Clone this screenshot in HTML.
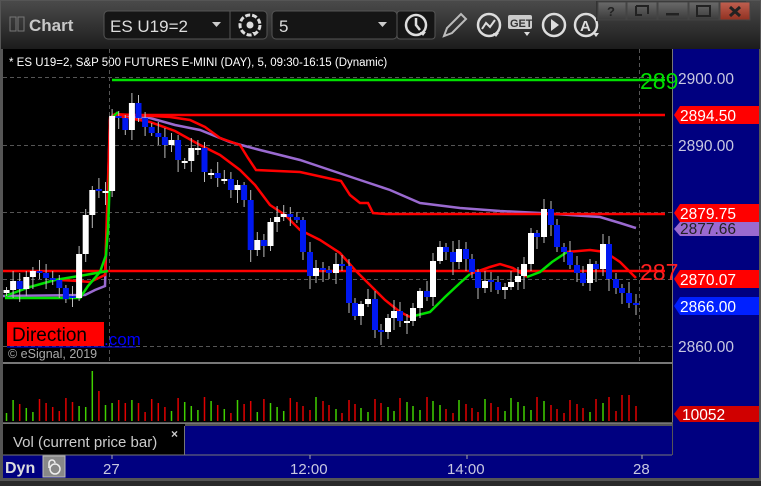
<!DOCTYPE html>
<html><head><meta charset="utf-8"><style>
body{margin:0;width:761px;height:481px;overflow:hidden;background:#2a2a2a;font-family:"Liberation Sans",sans-serif}
</style></head><body>
<svg id="s" width="761" height="481" xmlns="http://www.w3.org/2000/svg" font-family="Liberation Sans, sans-serif">
<defs><linearGradient id="tb" x1="0" y1="0" x2="0" y2="1"><stop offset="0" stop-color="#4a4a4a"/><stop offset="1" stop-color="#1c1c1c"/></linearGradient>
<linearGradient id="bt" x1="0" y1="0" x2="0" y2="1"><stop offset="0" stop-color="#6a6a6a"/><stop offset="1" stop-color="#3a3a3a"/></linearGradient>
<linearGradient id="bx" x1="0" y1="0" x2="0" y2="1"><stop offset="0" stop-color="#c06050"/><stop offset="1" stop-color="#903020"/></linearGradient></defs>
<rect width="761" height="481" fill="#555"/>
<rect x="1" y="1" width="759" height="48" fill="url(#tb)"/>
<rect x="10" y="17" width="6" height="14" fill="none" stroke="#777"/><rect x="18" y="17" width="6" height="14" fill="none" stroke="#777"/>
<text x="29" y="31" fill="#c8c8c8" font-size="17" font-weight="bold">Chart</text>
<rect x="104" y="11" width="163" height="28" rx="4" fill="#151515" stroke="#555"/>
<text x="110" y="32" fill="#ddd" font-size="17">ES U19=2</text>
<path d="M212 22l9 0-4.5 5z" fill="#ccc"/>
<line x1="230" y1="11" x2="230" y2="39" stroke="#555"/>
<circle cx="250" cy="25" r="10" fill="none" stroke="#ddd" stroke-width="3" stroke-dasharray="5 2"/><circle cx="250" cy="25" r="3.5" fill="#ddd"/><path d="M252 32l6 0-3 4z" fill="#ddd"/>
<rect x="272" y="11" width="125" height="28" rx="4" fill="#151515" stroke="#555"/>
<text x="279" y="32" fill="#ddd" font-size="17">5</text>
<path d="M378 22l9 0-4.5 5z" fill="#ccc"/>
<rect x="397" y="11" width="38" height="28" rx="3" fill="#151515" stroke="#555"/>
<circle cx="416" cy="25" r="10" fill="none" stroke="#ddd" stroke-width="2.5"/><path d="M416 18v7l4 5" stroke="#ddd" stroke-width="2.5" fill="none"/><path d="M420 32l6 0-3 4z" fill="#ddd"/>
<path d="M444 36l3-8 14-14 5 5-14 14z" fill="none" stroke="#bbb" stroke-width="2"/>
<circle cx="489" cy="25" r="11" fill="none" stroke="#ddd" stroke-width="2.5"/><path d="M482 29l4-6 4 4 5-7" stroke="#ddd" stroke-width="2" fill="none"/><path d="M493 33l6 0-3 4z" fill="#ddd"/>
<rect x="508" y="15" width="24" height="14" rx="2" fill="#ccc"/><text x="510" y="27" font-size="11" font-weight="bold" fill="#333">GET</text><path d="M524 32l6 0-3 4z" fill="#ddd"/>
<circle cx="554" cy="25" r="11" fill="none" stroke="#ddd" stroke-width="2.5"/><path d="M551 19v12l8-6z" fill="#ddd"/>
<circle cx="586" cy="25" r="11" fill="none" stroke="#ddd" stroke-width="2.5"/><text x="580" y="31" font-size="15" font-weight="bold" fill="#ddd">A</text><path d="M593 33l6 0-3 4z" fill="#ddd"/>
<rect x="596" y="1" width="150" height="20" fill="#333"/>
<rect x="598" y="2" width="28" height="18" fill="url(#bt)" stroke="#444"/><text x="607" y="16" fill="#222" font-size="13" font-weight="bold">?</text>
<rect x="627" y="2" width="30" height="18" fill="url(#bt)" stroke="#444"/><path d="M636 6h12v8M636 6v9h6" stroke="#222" stroke-width="2" fill="none"/>
<rect x="658" y="2" width="30" height="18" fill="url(#bt)" stroke="#444"/><rect x="666" y="13" width="13" height="2.5" fill="#222"/>
<rect x="689" y="2" width="30" height="18" fill="url(#bt)" stroke="#444"/><rect x="697" y="6" width="13" height="10" fill="none" stroke="#222" stroke-width="2"/>
<rect x="720" y="2" width="30" height="18" fill="url(#bx)" stroke="#444"/><path d="M730 7l10 9M740 7l-10 9" stroke="#222" stroke-width="3"/>
<rect x="3" y="49" width="670" height="314" fill="#000"/>
<rect x="673" y="49" width="86" height="406" fill="#000080"/>
<line x1="672.5" y1="49" x2="672.5" y2="422" stroke="#777"/>
<text x="9" y="66" fill="#fff" font-size="11.5">* ES U19=2, S&amp;P 500 FUTURES E-MINI (DAY), 5, 09:30-16:15 (Dynamic)</text>
<g stroke="#555" stroke-dasharray="4 3" stroke-width="1">
<line x1="3" y1="77.5" x2="672" y2="77.5"/><line x1="3" y1="145.5" x2="672" y2="145.5"/><line x1="3" y1="212.5" x2="672" y2="212.5"/><line x1="3" y1="279.5" x2="672" y2="279.5"/><line x1="3" y1="346.5" x2="672" y2="346.5"/>
<line x1="109.5" y1="49" x2="109.5" y2="362"/><line x1="639.5" y1="49" x2="639.5" y2="362"/>
<line x1="3" y1="421.5" x2="672" y2="421.5"/>
</g>
<line x1="112" y1="80" x2="665" y2="80" stroke="#00e000" stroke-width="2.5"/>
<line x1="112" y1="115" x2="665" y2="115" stroke="#ff0000" stroke-width="2.5"/>
<line x1="3" y1="271" x2="665" y2="271" stroke="#ff0000" stroke-width="2.5"/>
<g fill="none" stroke-width="2.5">
<polyline stroke="#9a6ad0" points="3,296 85,295 95,290 105,286 110,120 112,116 150,118 175,125 200,130 230,142 260,150 300,160 330,170 360,180 390,190 420,203 460,208 500,211 540,213 600,217 620,223 636,228"/>
<polyline stroke="#ff0000" points="60,280 78,281 90,282 105,275 110,118 115,114 170,117 190,120 205,127 220,138 240,145 248,158 256,170 300,172 341,181 350,195 360,203 368,203 373,213 386,214 665,214"/>
<polyline stroke="#ff0000" points="112,115 150,122 175,131 200,145 220,155 240,170 255,185 270,205 285,215 300,230 320,240 340,253 355,270 370,285 385,300 400,312 410,317"/>
<polyline stroke="#00e000" points="410,317 430,312 445,297 460,283 470,274"/>
<polyline stroke="#ff0000" points="470,274 490,267 500,264 513,268 527,277"/>
<polyline stroke="#00e000" points="527,277 540,272 552,262 567,252"/>
<polyline stroke="#ff0000" points="567,252 590,250 605,252 620,262 636,278"/>
<polyline stroke="#00e000" points="5,298 80,298 88,286 100,272 106,255 108,230 110,175 112,118 118,112"/>
<polyline stroke="#00e000" points="5,296 30,287 55,280 85,275 108,271"/>
</g>
<g id="c"></g>
<text x="640" y="89" fill="#00e000" font-size="23">289</text>
<text x="640" y="280" fill="#ff2020" font-size="23">287</text>
<rect x="7" y="322" width="97" height="24" fill="#ff0000"/>
<text x="12" y="341" fill="#000" font-size="19">Direction</text>
<text x="104" y="345" fill="#0000ff" font-size="17">.com</text>
<line x1="7" y1="347" x2="136" y2="347" stroke="#0000ff"/>
<text x="8" y="358" fill="#aaa" font-size="12.5">© eSignal, 2019</text>
<g font-size="15.5" fill="#c8c8e0">
<text x="678" y="84">2900.00</text><text x="678" y="151">2890.00</text><text x="678" y="352">2860.00</text>
</g>
<g font-size="15.5">
<polygon points="674,115 680,106 759,106 759,124 680,124" fill="#ff0000"/><text x="680" y="121" fill="#fff">2894.50</text>
<polygon points="674,213 680,204 759,204 759,222 680,222" fill="#ff0000"/><text x="680" y="219" fill="#fff">2879.75</text>
<polygon points="674,229 680,222 759,222 759,236 680,236" fill="#9a6ad0"/><text x="680" y="234" fill="#222">2877.66</text>
<polygon points="674,279 680,270 759,270 759,288 680,288" fill="#ff0000"/><text x="680" y="285" fill="#fff">2870.07</text>
<polygon points="674,306 680,297 759,297 759,315 680,315" fill="#0020ff"/><text x="680" y="312" fill="#fff">2866.00</text>
<polygon points="674,414 680,406 759,406 759,422 680,422" fill="#d00000"/><text x="682" y="420" fill="#fff">10052</text>
</g>
<rect x="3" y="364" width="669" height="58" fill="#000"/>
<line x1="3" y1="363" x2="672" y2="363" stroke="#777" stroke-width="2"/>
<g id="v"></g>
<rect x="3" y="423" width="182" height="32" fill="#000"/>
<rect x="185" y="426" width="487" height="29" fill="#000080"/>
<line x1="3" y1="423.5" x2="672" y2="423.5" stroke="#777"/>
<line x1="184.5" y1="426" x2="184.5" y2="455" stroke="#777"/>
<text x="13" y="447" fill="#ccc" font-size="15">Vol (current price bar)</text>
<text x="171" y="438" fill="#ccc" font-size="12" font-weight="bold">×</text>
<rect x="3" y="455" width="756" height="23" fill="#000080"/>
<line x1="3" y1="455" x2="672" y2="455" stroke="#777"/>
<text x="5" y="473" fill="#ddd" font-size="16" font-weight="bold">Dyn</text>
<rect x="43" y="456" width="22" height="21" fill="#888" stroke="#bbb"/><circle cx="55" cy="469" r="5" fill="none" stroke="#eee" stroke-width="1.5"/><path d="M49 468v-5a3 3 0 016 0" fill="none" stroke="#eee" stroke-width="1.5"/>
<g fill="#c8c8e0" font-size="15"><text x="103" y="474">27</text><text x="290" y="474">12:00</text><text x="447" y="474">14:00</text><text x="633" y="474">28</text></g>
<g stroke="#aaa"><line x1="112" y1="455" x2="112" y2="459"/><line x1="310" y1="455" x2="310" y2="459"/><line x1="467" y1="455" x2="467" y2="459"/><line x1="642" y1="455" x2="642" y2="459"/></g>
</svg>
<script>
var pre=[290,281,289,277,271,273,278,280,288,299,298,254,215,190,191,191,116,118,130,103,118,127,133,137,145,140,160,161,148,148,172,173,178,179,190,185,200,250,240,246,222,217,214,217,220];
var d=[];for(var i=0;i<pre.length;i++)d.push([6.5+i*6.6,pre[i]]);
d=d.concat([[303,252],[310,276],[316,268],[323,270],[329,273],[336,264],[342,266],[349,303],[355,316],[361,304],[368,299],[375,330],[381,332],[388,318],[394,311],[400,321],[407,321],[413,308],[420,291],[427,297],[433,261],[440,247],[446,252],[453,262],[459,249],[466,259],[472,272],[478,288],[485,281],[491,282],[498,290],[505,287],[511,282],[518,276],[524,264],[531,233],[537,237],[544,209],[551,225],[557,247],[564,252],[570,265],[577,273],[583,283],[590,264],[596,269],[603,244],[609,279],[616,288],[622,293],[629,303],[636,305]]);
var h='',vh='',prev=293;
for(i=0;i<d.length;i++){var x=d[i][0],c=d[i][1],o=prev;if(Math.abs(c-o)<2){o=c+(i%2?2:-2);}
var t=Math.min(o,c),b=Math.max(o,c),up=c<o;var wt=t-3-(i*7%9),wb=b+3+(i*5%11);
h+='<line x1="'+x+'" y1="'+wt+'" x2="'+x+'" y2="'+wb+'" stroke="#bbb"/>';
h+='<rect x="'+(x-3)+'" y="'+t+'" width="6" height="'+(b-t)+'" fill="'+(up?'#fff':'#0018f0')+'"/>';
var vv=8+(i*13%17);if(i==13)vv=50;if(i==14)vv=30;if(i==12)vv=14;if(i>=16&&i<=20)vv=18+(i*3%6);if(i==37)vv=20;if(x>=620&&x<=630)vv=26;if(x>=608&&x<615)vv=24;
vh+='<line x1="'+x+'" y1="421" x2="'+x+'" y2="'+(421-vv)+'" stroke="'+(up?'#40d000':'#e00000')+'" stroke-width="1.5"/>';
prev=c;}
document.getElementById('c').innerHTML=h;document.getElementById('v').innerHTML=vh;
</script>
</body></html>
